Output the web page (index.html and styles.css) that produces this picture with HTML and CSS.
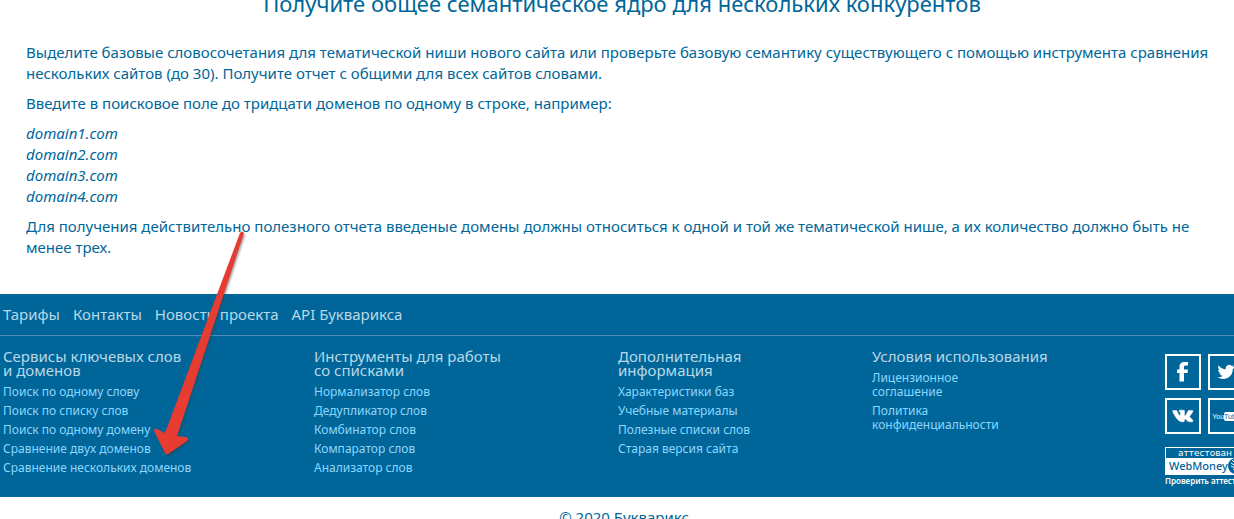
FILE: index.html
```html
<!DOCTYPE html>
<html lang="ru">
<head>
    <meta charset="UTF-8">
    <meta name="viewport" content="width=device-width, initial-scale=1.0">
    <title>Букварикс</title>
    <link rel="stylesheet" href="styles.css">
</head>
<body>
    <main class="content">
        <h1>Получите общее семантическое ядро для нескольких конкурентов</h1>
        <p>Выделите базовые словосочетания для тематической ниши нового сайта или проверьте базовую семантику существующего с помощью инструмента сравнения нескольких сайтов (до 30). Получите отчет с общими для всех сайтов словами.</p>
        <p>Введите в поисковое поле до тридцати доменов по одному в строке, например:</p>
        <p class="domains">domain1.com<br>domain2.com<br>domain3.com<br>domain4.com</p>
        <p>Для получения действительно полезного отчета введеные домены должны относиться к одной и той же тематической нише, а их количество должно быть не менее трех.</p>
    </main>

    <footer class="footer">
        <nav class="footer-nav">
            <a href="#">Тарифы</a>
            <a href="#">Контакты</a>
            <a href="#">Новости проекта</a>
            <a href="#">API Букварикса</a>
        </nav>
        <div class="footer-columns">
            <section class="column">
                <h2>Сервисы ключевых слов<br>и доменов</h2>
                <ul>
                    <li><a href="#">Поиск по одному слову</a></li>
                    <li><a href="#">Поиск по списку слов</a></li>
                    <li><a href="#">Поиск по одному домену</a></li>
                    <li><a href="#">Сравнение двух доменов</a></li>
                    <li><a href="#">Сравнение нескольких доменов</a></li>
                </ul>
            </section>
            <section class="column">
                <h2>Инструменты для работы<br>со списками</h2>
                <ul>
                    <li><a href="#">Нормализатор слов</a></li>
                    <li><a href="#">Дедупликатор слов</a></li>
                    <li><a href="#">Комбинатор слов</a></li>
                    <li><a href="#">Компаратор слов</a></li>
                    <li><a href="#">Анализатор слов</a></li>
                </ul>
            </section>
            <section class="column">
                <h2>Дополнительная<br>информация</h2>
                <ul>
                    <li><a href="#">Характеристики баз</a></li>
                    <li><a href="#">Учебные материалы</a></li>
                    <li><a href="#">Полезные списки слов</a></li>
                    <li><a href="#">Старая версия сайта</a></li>
                </ul>
            </section>
            <section class="column">
                <h2>Условия использования</h2>
                <ul>
                    <li><a href="#">Лицензионное<br>соглашение</a></li>
                    <li><a href="#">Политика<br>конфиденциальности</a></li>
                </ul>
            </section>
            <div class="social">
                <div class="social-icons">
                    <a href="#" aria-label="Facebook">
                        <svg viewBox="0 0 32 32"><path fill="#fff" d="M12.500 25.500V17H10v-3.500h2.500V11c0-3.500 1.800-5 5-5H21v3.500h-2c-1.500 0-2 .5-2 1.500v2.500h4l-.5 3.500H17v8.500z"/></svg>
                    </a>
                    <a href="#" aria-label="Twitter">
                        <svg viewBox="0 0 32 32"><path fill="#fff" d="M24.500 10.500c-.6.300-1.300.5-2 .6.700-.4 1.300-1.100 1.500-1.900-.7.400-1.400.7-2.200.8a3.500 3.500 0 0 0-6 3.200c-2.900-.1-5.500-1.500-7.200-3.700-.9 1.600-.5 3.600 1.100 4.700-.6 0-1.100-.2-1.600-.4 0 1.700 1.200 3.100 2.800 3.500-.5.100-1 .1-1.600 0 .5 1.400 1.700 2.400 3.300 2.400-1.500 1.200-3.200 1.700-5.100 1.500 6.700 4.200 15.300.2 15.300-8 .7-.5 1.300-1.600 1.700-2.700z"/></svg>
                    </a>
                    <a href="#" aria-label="ВКонтакте">
                        <svg viewBox="0 0 32 32"><path fill="#fff" stroke="#fff" stroke-width=".6" transform="translate(2 2) scale(.88)" d="M15.300 22.500h1.300s.4 0 .6-.3c.2-.2.200-.6.200-.6s0-2 .9-2.200c.9-.3 2 1.800 3.200 2.600.9.600 1.600.5 1.600.5h3.100s1.600-.1.900-1.400c-.1-.1-.5-1-2.400-2.800-2-1.800-1.700-1.500.7-4.700 1.400-2 2-3.100 1.800-3.600-.2-.5-1.300-.4-1.300-.4h-3.500s-.5 0-.7.400c-.6 1.500-1.400 2.900-2.200 4.100-1 1.500-1.300 1.600-1.500 1.500-.6-.4-.4-1.500-.4-2.300 0-2.500.4-3.500-.7-3.800-1.100-.3-4-.4-5 .1-.5.200-.8.700-.6.800.3 0 .9.200 1.200.6.700.9.500 4.500-.2 4.600-.6 0-2-2.200-3.100-5-.2-.8-.7-.9-1.200-.9H5s-.9 0-.9.400c-.1.700 2.900 6.600 5.500 9.600 2.400 2.900 5.700 2.800 5.700 2.800z"/></svg>
                    </a>
                    <a class="youtube" href="#" aria-label="YouTube">
                        <span>You</span><span class="tube">Tube</span>
                    </a>
                </div>
                <a class="webmoney" href="#">
                    <span class="webmoney-top">аттестован</span>
                    <span class="webmoney-name">WebMoney
                        <svg viewBox="0 0 16 16"><circle cx="8" cy="8" r="8" fill="#069"/><g fill="none" stroke="#fff"><path d="M4 2l2 2 3-2 4 2M3 5l3 2 3-3 5 2M3 8l4 2 3-3 5 2M5 11l3 2 3-3 3 2"/></g></svg>
                    </span>
                </a>
                <a class="check" href="#">Проверить аттестат</a>
            </div>
        </div>
    </footer>

    <p class="copyright">© 2020 Букварикс</p>

    <!-- Pointer to the multi-domain comparison link -->
    <svg class="arrow" viewBox="0 0 100 235" aria-hidden="true">
        <path d="M90 8q2-3 4 0L27 211l9 1q4 2 1 4L18 229q-2 1-3-1L4 206q0-3 3-2l8 4z" class="arrow-body"/>
    </svg>
</body>
</html>
```
FILE: styles.css
```css
body {
    position: relative;
    margin: 0;
    overflow: hidden;
    font-family: 'Noto Sans', sans-serif;
    font-size: 15px;
    color: #069;
    background: #fff;
}

a {
    color: inherit;
    text-decoration: none;
}

.content {
    margin-top: -13px;
    padding: 0 16px 36px 26px;
}

h1 {
    margin: 0 0 23px;
    font-size: 22px;
    font-weight: 400;
    line-height: 32px;
    text-align: center;
}

.content p {
    margin: 0 0 9px;
    line-height: 21px;
}

.content .domains {
    font-style: italic;
}

.content p:last-child {
    margin-bottom: 0;
}

.footer {
    overflow: hidden;
    color: #b8d8e8;
    background: #069;
}

.footer-nav {
    display: flex;
    gap: 13px;
    padding: 10px 3px 11px;
    line-height: 20px;
    border-bottom: 1px solid #4d8fb8;
}

.footer-columns {
    display: grid;
    grid-template-columns: 311fr 304fr 254fr 293fr 69fr;
    padding: 13px 0 10px 3px;
}

.column {
    min-width: 0;
}

.column h2 {
    margin: 0 0 8px;
    font-size: 15px;
    font-weight: 400;
    line-height: 14px;
}

.column ul {
    margin: 0;
    padding: 0;
    list-style: none;
    font-size: 12px;
    line-height: 14px;
    color: #8cd6ff;
}

.column li {
    margin-bottom: 5px;
}

.social {
    min-width: 0;
    padding-top: 5px;
}

.social-icons {
    display: grid;
    grid-template-columns: 36px 36px;
    gap: 8px 7px;
}

.social-icons a {
    display: flex;
    align-items: center;
    justify-content: center;
    box-sizing: border-box;
    height: 36px;
    border: 2px solid #fff;
}

.social-icons svg {
    width: 32px;
    height: 32px;
}

.social-icons .youtube {
    font-family: 'Liberation Sans', sans-serif;
    font-size: 7px;
    line-height: 9px;
    color: #fff;
}

.youtube .tube {
    border-radius: 2px;
    color: #069;
    background: #fff;
}

.webmoney {
    display: block;
    box-sizing: border-box;
    width: 88px;
    margin-top: 13px;
    border: 1px solid #fff;
    background: #fff;
}

.webmoney-top {
    display: block;
    padding-left: 12px;
    font-family: 'DejaVu Sans', sans-serif;
    font-size: 9px;
    line-height: 10px;
    color: #fff;
    background: #069;
}

.webmoney-name {
    display: flex;
    align-items: center;
    padding-left: 3px;
    font-size: 11px;
    font-weight: 500;
    line-height: 16px;
    color: #069;
}

.webmoney-name svg {
    flex: none;
    width: 16px;
    height: 16px;
}

.check {
    display: block;
    font-size: 8px;
    font-weight: 600;
    line-height: 12px;
    white-space: nowrap;
    color: #fff;
}

.copyright {
    margin: 10px 0 0;
    padding-left: 14px;
    line-height: 21px;
    text-align: center;
}

.arrow {
    position: absolute;
    top: 225px;
    left: 150px;
    width: 100px;
    height: 235px;
    overflow: visible;
    filter: drop-shadow(1px 2px 1px rgba(60, 60, 60, 0.5));
    pointer-events: none;
}

.arrow-body {
    fill: #e63c32;
}
```
